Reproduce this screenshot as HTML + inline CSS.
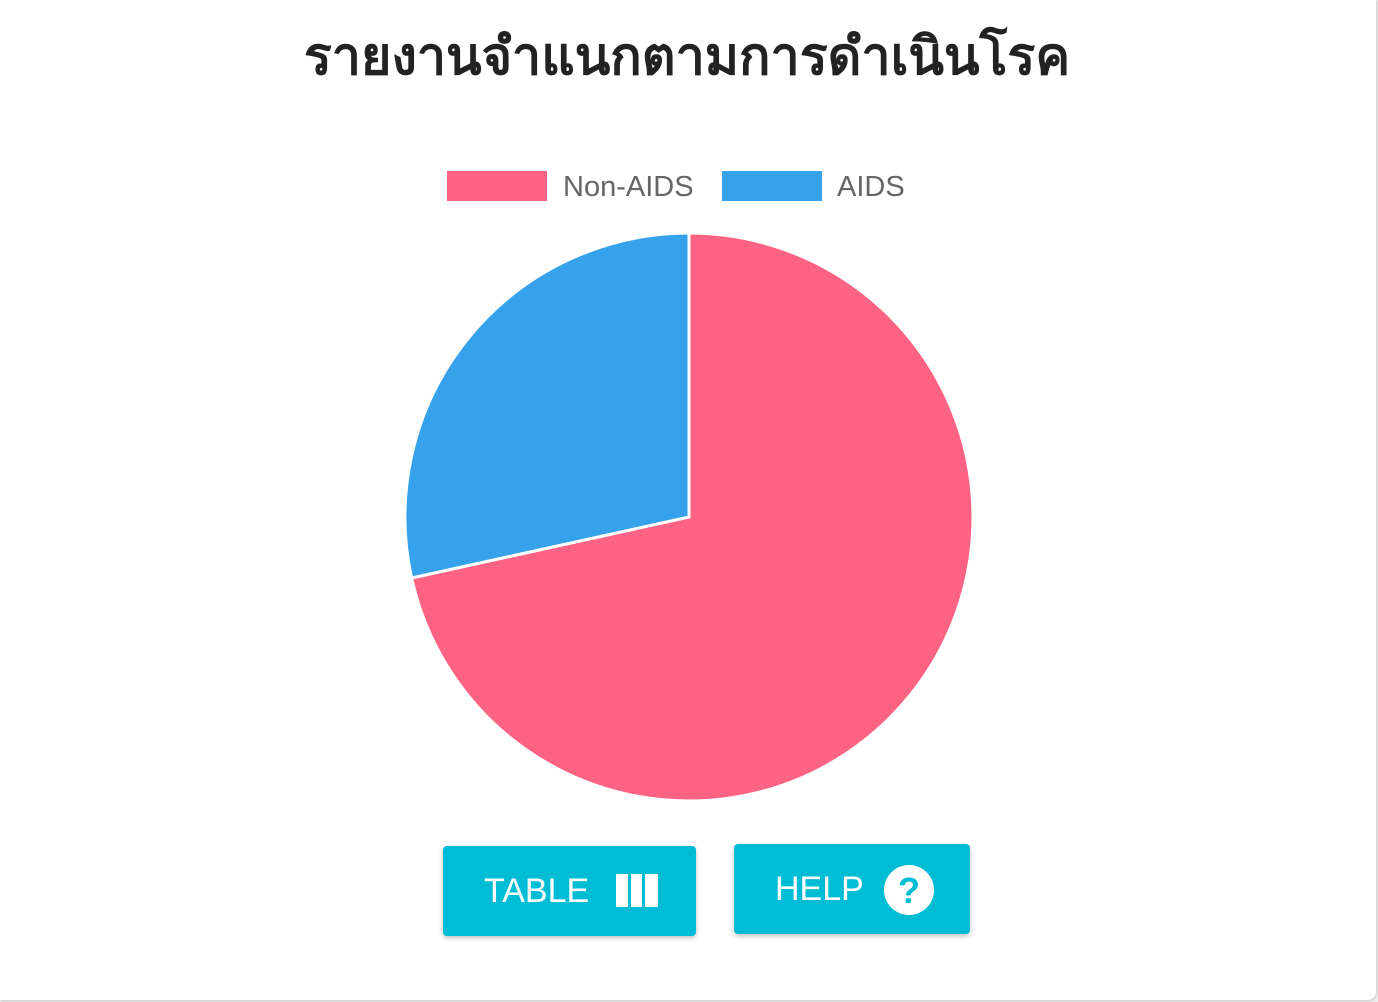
<!DOCTYPE html>
<html><head><meta charset="utf-8"><style>
body{margin:0;width:1378px;height:1002px;background:#eee;position:relative;overflow:hidden;font-family:"Liberation Sans",sans-serif}
.card{position:absolute;left:0;top:0;width:1376px;height:1000px;background:#fff;border-radius:0 0 8px 0;box-shadow:1px 1px 2px rgba(0,0,0,.15)}
h1{position:absolute;left:0;width:1374px;top:14px;margin:0;text-align:center;font:bold 52px "Liberation Sans","Noto Sans CJK SC",sans-serif;color:#222}
.lg{position:absolute;font-size:29px;color:#666;top:171px}
.box{position:absolute;top:171px;height:30px;width:100px}
.btn{position:absolute;background:#00bcd4;border-radius:4px;box-shadow:0 2px 5px rgba(0,0,0,.25);color:#fff;font-size:34px}
</style></head><body><div class="card">
<h1>รายงานจำแนกตามการดำเนินโรค</h1>
<div class="box" style="left:447px;background:#ff6384"></div><div class="lg" style="left:563px">Non-AIDS</div>
<div class="box" style="left:722px;background:#36a2eb"></div><div class="lg" style="left:837px">AIDS</div>
<svg style="position:absolute;left:0;top:0" width="1378" height="1002">
<path d="M689 517 L689 233 A284 284 0 1 1 411.6 578 Z" fill="#ff6384" stroke="#fff" stroke-width="3"/>
<path d="M689 517 L411.6 578 A284 284 0 0 1 689 233 Z" fill="#36a2eb" stroke="#fff" stroke-width="3"/>
</svg>
<div class="btn" style="left:443px;top:846px;width:253px;height:90px"><span style="position:absolute;left:41px;top:26px">TABLE</span>
<svg style="position:absolute;left:173px;top:28px" width="42" height="34"><rect x="0" y="0" width="12" height="33" fill="#fff"/><rect x="15" y="0" width="11" height="33" fill="#fff"/><rect x="29" y="0" width="13" height="33" fill="#fff"/></svg></div>
<div class="btn" style="left:734px;top:844px;width:236px;height:90px"><span style="position:absolute;left:41px;top:26px">HELP</span>
<svg style="position:absolute;left:150px;top:21px" width="50" height="50"><circle cx="25" cy="25" r="25" fill="#fff"/><text x="25" y="38" text-anchor="middle" font-family="Liberation Sans" font-weight="bold" font-size="36" fill="#00bcd4">?</text></svg></div>
</div></body></html>
